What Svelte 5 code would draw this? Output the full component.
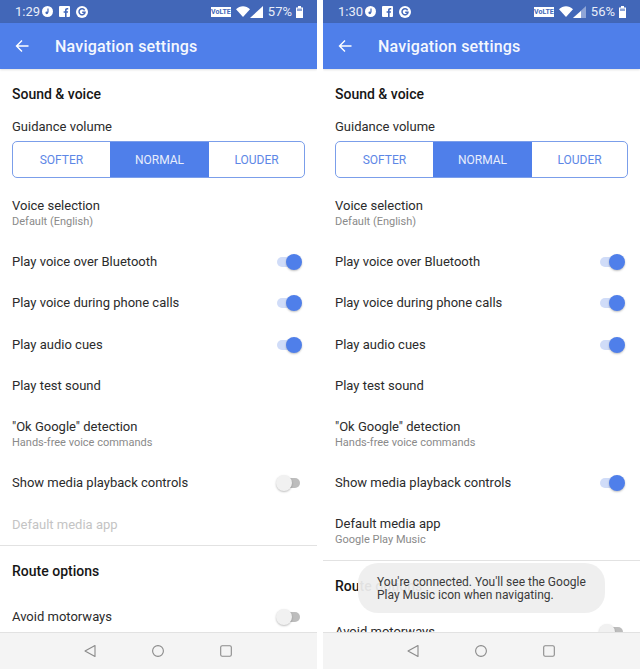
<script>
  // Two phone screenshots side by side, same screen before and after enabling media controls.
  const phones = [
    { time: '1:29', battery: '57%', media: false, signalFull: true, toast: false },
    { time: '1:30', battery: '56%', media: true, signalFull: false, toast: true }
  ];
</script>

{#snippet toggle(on)}
  <span class="switch" class:on>
    <span class="track"></span>
    <span class="thumb"></span>
  </span>
{/snippet}

{#snippet row(label, sub, control)}
  <div class="row" class:double={sub}>
    <div class="copy">
      <div class="label">{label}</div>
      {#if sub}<div class="sub">{sub}</div>{/if}
    </div>
    {#if control !== undefined}{@render toggle(control)}{/if}
  </div>
{/snippet}

<div class="page">
  {#each phones as p}
    <section class="phone">
      <header class="status">
        <span class="time">{p.time}</span>
        <span class="notifs">
          <svg width="11" height="11" viewBox="0 0 11 11"><circle cx="5.5" cy="5.5" r="5.5" fill="#fff"/><path d="M6 2.5v4" stroke="#4267b8" stroke-width="1.2"/><circle cx="4.8" cy="6.8" r="1.4" fill="#4267b8"/></svg>
          <svg width="11" height="11" viewBox="0 0 11 11"><rect width="11" height="11" rx="1" fill="#fff"/><path d="M7.6 11V6.8h1.3l.2-1.6H7.6v-1c0-.5.2-.8.8-.8h.8V2c-.3 0-.7-.1-1.1-.1C6.900 1.900 6 2.600 6 4v1.200H4.600v1.600H6V11z" fill="#4267b8"/></svg>
          <svg width="12" height="12" viewBox="0 0 12 12"><circle cx="6" cy="6" r="6" fill="#fff"/><path d="M8.600 4.300A3 3 0 1 0 9 6.200H6.200" fill="none" stroke="#4267b8" stroke-width="1.500"/></svg>
        </span>
        <span class="indicators">
          <span class="volte">VoLTE</span>
          <svg width="14" height="11" viewBox="0 0 14 11"><path d="M0 3.200C4-.9 10-.9 14 3.200L7 11z" fill="#fff"/></svg>
          <svg width="13" height="12" viewBox="0 0 13 12"><path d="M13 0v12H0z" fill={p.signalFull ? '#fff' : '#8fa5d6'}/>{#if !p.signalFull}<path d="M8 5v7H0z" fill="#fff"/>{/if}</svg>
          <span class="pct">{p.battery}</span>
          <svg width="7" height="12" viewBox="0 0 7 12"><path d="M2 0h3v1.500h2V12H0V1.500h2z" fill="#fff"/><rect x="1" y="2.500" width="5" height="2.500" fill="#8fa5d6"/></svg>
        </span>
      </header>

      <div class="appbar">
        <svg class="back" width="14" height="14" viewBox="0 0 14 14"><path d="M13.500 7H1.500M7 1.500 1.500 7 7 12.500" fill="none" stroke="#fff" stroke-width="1.400"/></svg>
        <h1>Navigation settings</h1>
      </div>

      <div class="content">
        <h2>Sound &amp; voice</h2>
        <div class="volume-label">Guidance volume</div>
        <div class="segments">
          <span>SOFTER</span>
          <span class="active">NORMAL</span>
          <span>LOUDER</span>
        </div>

        {@render row('Voice selection', 'Default (English)')}
        {@render row('Play voice over Bluetooth', '', true)}
        {@render row('Play voice during phone calls', '', true)}
        {@render row('Play audio cues', '', true)}
        {@render row('Play test sound', '')}
        {@render row('"Ok Google" detection', 'Hands-free voice commands')}
        {@render row('Show media playback controls', '', p.media)}
        {#if p.media}
          {@render row('Default media app', 'Google Play Music')}
        {:else}
          <div class="row disabled"><div class="label">Default media app</div></div>
        {/if}

        <hr />
        <h2>Route options</h2>
        {@render row('Avoid motorways', '', false)}
      </div>

      {#if p.toast}
        <div class="toast">You're connected. You'll see the Google Play Music icon when navigating.</div>
      {/if}

      <nav class="softkeys">
        <svg width="14" height="14" viewBox="0 0 14 14"><path d="M12 1.500v11L2 7z" fill="none" stroke="#8a8a8a" stroke-width="1.100" stroke-linejoin="round"/></svg>
        <svg width="14" height="14" viewBox="0 0 14 14"><circle cx="7" cy="7" r="5.400" fill="none" stroke="#8a8a8a" stroke-width="1.100"/></svg>
        <svg width="14" height="14" viewBox="0 0 14 14"><rect x="1.700" y="1.700" width="10.600" height="10.600" rx="1.500" fill="none" stroke="#8a8a8a" stroke-width="1.100"/></svg>
      </nav>
    </section>
  {/each}
</div>

<style>
  :global(body) { margin: 0; background: #fff; }
  .page { display: flex; justify-content: space-between; width: 640px; height: 669px; overflow: hidden;
    font-family: Roboto, "Noto Sans", sans-serif; color: #2b2b2b; }
  .phone { position: relative; display: flex; flex-direction: column; width: 317px; height: 669px; overflow: hidden; }

  .status { flex: none; display: flex; align-items: center; height: 23px; padding: 0 14px 0 15px; box-sizing: border-box;
    background: #4267b8; color: #e8edf8; font-size: 13px; }
  .time { width: 27px; }
  .notifs { display: flex; align-items: center; gap: 6px; margin-left: 0; }
  .indicators { display: flex; align-items: center; margin-left: auto; }
  .volte { width: 20px; height: 10px; box-sizing: border-box; margin-right: 5px; background: #fff; color: #4267b8;
    font-size: 7px; font-weight: 700; line-height: 10px; text-align: center; overflow: hidden; }
  .pct { margin: 0 4px 0 5px; }

  .appbar { flex: none; display: flex; align-items: center; height: 46px; padding-left: 15px; background: #4f7fea;
    box-shadow: 0 1px 2px rgba(0, 0, 0, .12); position: relative; }
  .appbar h1 { margin: 0 0 0 26px; font-size: 16px; font-weight: 500; color: #f4f7fe; letter-spacing: .2px; }

  .content { flex: 1; min-height: 0; overflow: hidden; }
  h2 { display: flex; align-items: center; height: 50px; margin: 0; padding-left: 12px; font-size: 14px; font-weight: 500; color: #161616; }
  .volume-label { height: 16px; line-height: 16px; padding-left: 12px; font-size: 13px; }

  .segments { display: grid; grid-template-columns: 97px 99px 1fr; height: 37px; box-sizing: border-box; margin: 6px 12px 7.5px;
    border: 1.5px solid #7b9eea; border-radius: 5px; overflow: hidden; }
  .segments span { display: flex; align-items: center; justify-content: center; color: #5d87e6; font-size: 12px; }
  .segments .active { background: #4f7fea; color: #e8eefc; }

  .row { display: flex; align-items: center; justify-content: space-between; height: 41.3px; padding-left: 12px; box-sizing: border-box; }
  .row.double { height: 56px; }
  .label { font-size: 13px; line-height: 16px; }
  .sub { margin-top: 0; font-size: 11px; line-height: 16px; color: #8a8a8a; }
  .disabled .label { color: #c4c4c4; }

  hr { height: 1px; margin: 0; border: 0; background: #e2e2e2; }

  .switch { position: relative; flex: none; width: 26px; height: 16px; margin-right: 15px; }
  .track { position: absolute; left: 7px; top: 3px; width: 17px; height: 10px; border-radius: 5px; background: #bdbdbd; }
  .thumb { position: absolute; left: 0; top: 0; width: 16px; height: 16px; border-radius: 50%; background: #f1f1f1;
    box-shadow: 0 1px 2px rgba(0, 0, 0, .25); }
  .on .track { left: 1px; background: #d0dcf8; }
  .on .thumb { left: 10px; background: #4f7fea; }

  .toast { position: absolute; left: 35px; top: 563px; width: 247px; height: 50px; box-sizing: border-box; padding: 13px 19px;
    border-radius: 20px; background: rgba(238, 238, 238, .94); font-size: 12px; line-height: 12.500px; color: #3a3a3a; }

  .softkeys { position: absolute; left: 0; right: 0; top: 632px; height: 37px; display: grid; grid-template-columns: 14px 14px 14px;
    column-gap: 54px; padding-left: 83px; box-sizing: border-box; align-items: center; background: #f4f4f4; border-top: 1px solid #e2e2e2; }
</style>
